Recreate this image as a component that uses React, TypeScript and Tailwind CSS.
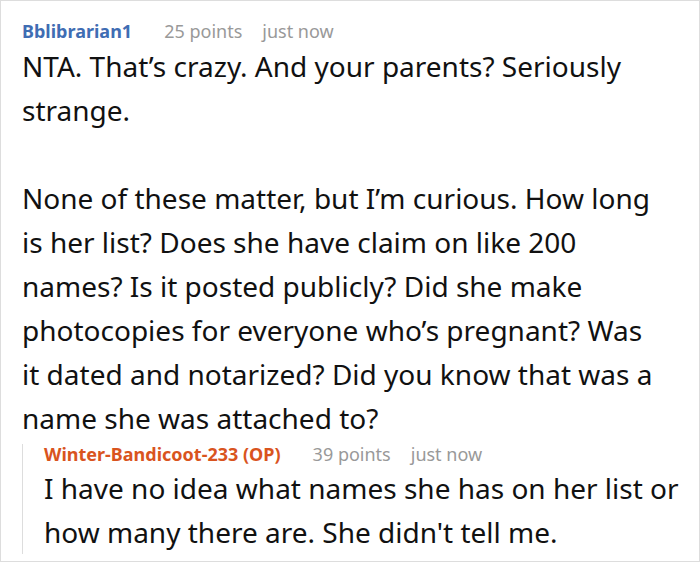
import React from "react";

const font = { fontFamily: '"Noto Sans", "Open Sans", sans-serif' };

function Meta({ name, points, color }: { name: string; points: string; color: string }) {
  return (
    <div className="flex items-baseline text-[18px]">
      <span className={`font-bold ${color}`}>{name}</span>
      <span className="ml-[32px] text-[#999999]">{points}</span>
      <span className="ml-[20px] text-[#999999]">just now</span>
    </div>
  );
}

export default function App() {
  return (
    <div
      style={font}
      className="w-[700px] h-[562px] overflow-hidden border border-[#dddddd] bg-white pl-[21px] pr-[23px] pt-[17px] text-[#111111]"
    >
      <div className="leading-[26px]">
        <Meta name="Bblibrarian1" points="25 points" color="text-[#3f6db3]" />
      </div>
      <div className="mr-[14px] text-[28px] leading-[44px]">
        <p>NTA. That’s crazy. And your parents? Seriously strange.</p>
        <p className="mt-[44px]">
          None of these matter, but I’m curious. How long is her list? Does she have claim on like 200
          names? Is it posted publicly? Did she make photocopies for everyone who’s pregnant? Was it
          dated and notarized? Did you know that was a name she was attached to?
        </p>
      </div>
      <div className="mt-[13px] -mr-[16px] border-l border-[#dddddd] pl-[21px]">
        <div className="-mt-[9px] leading-[20px]">
          <Meta name="Winter-Bandicoot-233 (OP)" points="39 points" color="text-[#d9541e]" />
        </div>
        <div className="mt-[2px] text-[28px] leading-[44px]">
          <p>I have no idea what names she has on her list or how many there are. She didn't tell me.</p>
        </div>
      </div>
    </div>
  );
}
